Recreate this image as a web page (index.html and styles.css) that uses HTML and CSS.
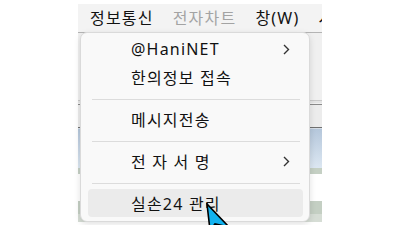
FILE: index.html
```html
<!DOCTYPE html>
<html lang="ko">
<head>
<meta charset="utf-8">
<link rel="stylesheet" href="styles.css">
</head>
<body>
<div class="app">
  <div class="menubar">
    <span class="mb-item active">정보통신</span>
    <span class="mb-item disabled">전자차트</span>
    <span class="mb-item">창(W)</span>
    <span class="mb-item">시스템</span>
  </div>
  <div class="content">
    <div class="b b1"></div>
    <div class="b b2"></div>
    <div class="b b3"></div>
    <div class="b b4"></div>
    <div class="b b5"></div>
    <div class="b b6"></div>
    <div class="b b7"></div>
    <div class="b b8"></div>
    <div class="b b9"></div>
    <div class="b b10"></div>
    <div class="b b11"></div>
    <div class="b b12"></div>
    <div class="b b13"></div>
    <div class="b b14"></div>
  </div>
  <div class="dropdown">
    <div class="item"><span>@HaniNET</span><svg class="chev" width="7" height="11" viewBox="0 0 7 11"><path d="M1 1 L5.5 5.5 L1 10" fill="none" stroke="#333" stroke-width="1.4"/></svg></div>
    <div class="item"><span>한의정보 접속</span></div>
    <div class="sep"></div>
    <div class="item"><span>메시지전송</span></div>
    <div class="sep"></div>
    <div class="item"><span>전 자 서 명</span><svg class="chev" width="7" height="11" viewBox="0 0 7 11"><path d="M1 1 L5.5 5.5 L1 10" fill="none" stroke="#333" stroke-width="1.4"/></svg></div>
    <div class="sep"></div>
    <div class="item hover"><span>실손24 관리</span></div>
  </div>
  <svg class="cursor" width="26" height="28" viewBox="0 0 26 28"><path d="M1 1 L4 27 L9 21 L23 24 Z" fill="#12b2ef" stroke="#000" stroke-width="1.6" stroke-linejoin="miter"/></svg>
</div>
</body>
</html>
```
FILE: styles.css
```css
html, body {
  margin: 0;
  padding: 0;
  background: #ffffff;
  width: 400px;
  height: 225px;
  overflow: hidden;
}
.app {
  position: relative;
  margin: 4px 0 0 78px;
  width: 244px;
  height: 218px;
  font-family: "Noto Sans", "Noto Sans CJK KR", sans-serif;
  font-size: 16px;
  letter-spacing: 1.2px;
  color: #111111;
}
.menubar {
  height: 28px;
  background: #f3f3f3;
  display: flex;
  align-items: center;
  padding-left: 2px;
  overflow: hidden;
  white-space: nowrap;
}
.mb-item {
  padding: 0 9px 0 10px;
  line-height: 28px;
}
.mb-item.disabled {
  color: #a3a3a3;
}
.content {
  display: flex;
  flex-direction: column;
  height: 190px;
}
.b { flex: none; }
.b1 { height: 1px; background: #b4b4b4; }
.b2 { height: 67px; background: #f0f0f0; }
.b3 { height: 1px; background: #c9c9c9; }
.b4 { height: 2px; background: #e4e4e4; }
.b5 { height: 1px; background: #f0f0f0; }
.b6 { height: 1px; background: #8a8a8a; }
.b7 { height: 22px; background: #ececec; }
.b8 { height: 1px; background: #707070; }
.b9 { height: 1px; background: #d5dde6; }
.b10 { height: 39px; background: linear-gradient(#b5c7db, #dce7f2); }
.b11 { height: 6px; background: #c5d0c4; }
.b12 { height: 27px; background: #ffffff; }
.b13 { height: 13px; background: #c4cfc3; }
.b14 { height: 8px; background: #d6ddd5; }
.dropdown {
  position: absolute;
  left: 2px;
  top: 28px;
  width: 228px;
  box-sizing: content-box;
  border: 1px solid #dadada;
  border-radius: 7px;
  background: #f9f9f9;
  box-shadow: 0 2px 6px rgba(0, 0, 0, 0.12);
  padding: 2px 0 4px;
}
.item {
  height: 28px;
  margin: 0 6px 0 7px;
  padding: 0 13px 0 43px;
  display: flex;
  align-items: center;
  justify-content: space-between;
  border-radius: 4px;
  white-space: nowrap;
}
.item.hover {
  background: #ebebeb;
}
.chev {
  display: block;
}
.sep {
  height: 1px;
  background: #dcdcdc;
  margin: 8px 9px 5px 11px;
}
.cursor {
  position: absolute;
  left: 128px;
  top: 199px;
}
```
